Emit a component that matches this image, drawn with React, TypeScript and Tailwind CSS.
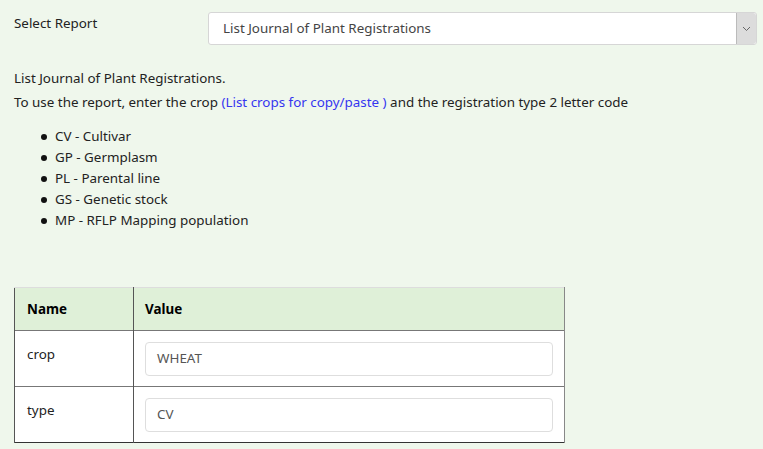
export default function App() {
  const types = [
    "CV - Cultivar",
    "GP - Germplasm",
    "PL - Parental line",
    "GS - Genetic stock",
    "MP - RFLP Mapping population",
  ];

  return (
    <div className="min-h-[449px] bg-[#eff7ec] pl-[14px] pr-[6px] pt-[12px] text-[13.4px] leading-[1.5] text-[#222] [font-family:'Noto_Sans',sans-serif]">
      {/* report picker */}
      <div className="flex items-start">
        <div className="w-[194px] pt-[1px]">Select Report</div>
        <div className="flex h-[33px] flex-1 items-stretch rounded-[3px] border border-[#d6d6d6] bg-white">
          <div className="flex flex-1 items-center px-[14px] text-[#444]">
            List Journal of Plant Registrations
          </div>
          <div className="flex w-[20px] items-center justify-center rounded-r-[3px] border-l border-[#bbb] bg-[#dcdcdc]">
            <svg width="9" height="6" viewBox="0 0 9 6" fill="none">
              <path d="M1 1l3.5 3.5L8 1" stroke="#666" strokeWidth="1" />
            </svg>
          </div>
        </div>
      </div>

      {/* description */}
      <div className="mt-[21px] leading-[24px]">
        <p>List Journal of Plant Registrations.</p>
        <p>
          To use the report, enter the crop{" "}
          <a className="text-[#3535f0]">(List crops for copy/paste )</a> and the
          registration type 2 letter code
        </p>
      </div>

      <ul className="mt-[12px] pl-[27px] leading-[21px]">
        {types.map((t) => (
          <li key={t} className="flex items-center">
            <span className="mr-[8px] h-[6px] w-[6px] rounded-full bg-[#111]" />
            {t}
          </li>
        ))}
      </ul>

      {/* parameter table */}
      <table className="mt-[56px] w-[551px] border-collapse">
        <thead>
          <tr className="h-[43px] bg-[#dff0d8] font-bold text-black">
            <th className="w-[119px] border-l border-r border-t border-l-[#555] border-r-[#555] border-t-[#ddd] px-[12px] text-left">
              Name
            </th>
            <th className="border-r border-t border-r-[#888] border-t-[#ddd] px-[11px] text-left">
              Value
            </th>
          </tr>
        </thead>
        <tbody className="bg-white">
          {[
            ["crop", "WHEAT"],
            ["type", "CV"],
          ].map(([name, value], i) => (
            <tr
              key={name}
              className={`h-[56px] border-t border-[#777] ${i === 1 ? "border-b border-b-[#333]" : ""}`}
            >
              <td className="border-l border-r border-l-[#555] border-r-[#555] px-[12px] pt-[13px] align-top">
                {name}
              </td>
              <td className="border-r border-r-[#888] px-[11px] align-middle">
                <div className="flex h-[34px] items-center rounded-[4px] border border-[#dedede] px-[11px] text-[#555]">
                  {value}
                </div>
              </td>
            </tr>
          ))}
        </tbody>
      </table>
    </div>
  );
}
